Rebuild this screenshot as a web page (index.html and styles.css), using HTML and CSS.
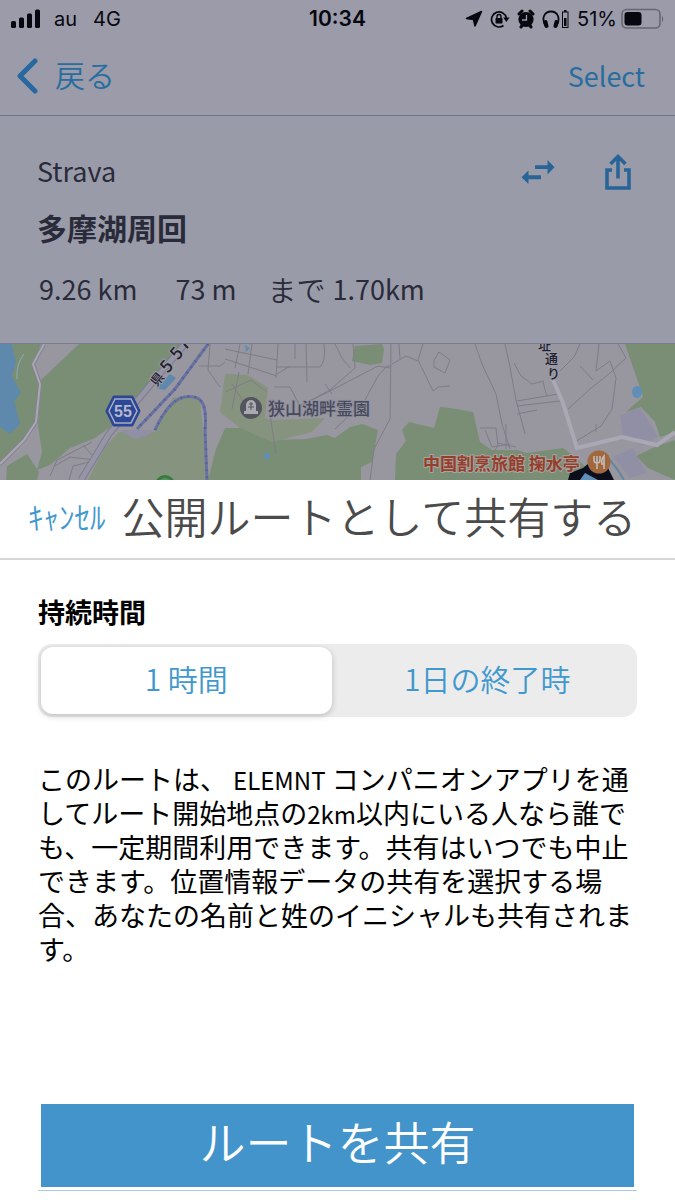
FILE: index.html
```html
<!DOCTYPE html>
<html lang="ja">
<head>
<meta charset="utf-8">
<meta name="viewport" content="width=device-width, initial-scale=1">
<title>公開ルートとして共有する</title>
<link rel="stylesheet" href="styles.css">
</head>
<body>
<div class="backdrop">
  <div class="status">
    <div class="status-side">
      <svg class="icon" width="32" height="20" viewBox="0 0 32 20" aria-hidden="true"><rect x="1" y="12" width="5" height="7" rx="1.500"/><rect x="9" y="8.500" width="5" height="10.500" rx="1.500"/><rect x="17" y="4.500" width="5" height="14.500" rx="1.500"/><rect x="25" y="0.500" width="5" height="18.500" rx="1.500"/></svg>
      <span class="carrier">au</span>
      <span class="network">4G</span>
    </div>
    <time class="clock">10:34</time>
    <div class="status-side status-right">
      <svg class="icon" width="18" height="18" viewBox="0 0 18 18" aria-hidden="true"><path d="M16.500 1.500 L10 16 L8.500 9.500 L1.500 8.500 Z" stroke="#07070f" stroke-width="1.500" stroke-linejoin="round"/></svg>
      <svg class="icon" width="20" height="18" viewBox="0 0 20 18" aria-hidden="true"><path d="M13.500 15.500 A7.500 7.500 0 1 1 16.400 8" fill="none" stroke="#07070f" stroke-width="1.700"/><path d="M13.200 7.500 h6.300 l-3.100 4.500z"/><rect x="5.500" y="8" width="7" height="5.500" rx="0.800"/><path d="M7 8 V6.500 a2 2 0 0 1 4 0 V8" fill="none" stroke="#07070f" stroke-width="1.400"/></svg>
      <svg class="icon" width="18" height="20" viewBox="0 0 18 20" aria-hidden="true"><circle cx="9" cy="10.500" r="7.600"/><path d="M2 5 L5 2 M16 5 L13 2 M4 18 L5.500 16 M14 18 L12.500 16" stroke="#07070f" stroke-width="3" stroke-linecap="round"/><path d="M9.500 6 V11 H5" fill="none" stroke="#9b9ba9" stroke-width="1.300"/></svg>
      <svg class="icon" width="28" height="20" viewBox="0 0 28 20" aria-hidden="true"><path d="M3.500 17 C-1 9 2.500 2.500 9 2.500 S19 9 14.500 17" fill="none" stroke="#07070f" stroke-width="1.800"/><rect x="2" y="11" width="4" height="8" rx="1.800" transform="rotate(-14 4 15)"/><rect x="12" y="11" width="4" height="8" rx="1.800" transform="rotate(14 14 15)"/><rect x="20.500" y="3" width="5.500" height="15.500" fill="none" stroke="#07070f"/><rect x="22" y="1" width="2.500" height="2"/><rect x="22" y="9" width="2.500" height="8"/></svg>
      <span class="percent">51%</span>
      <svg class="icon" width="44" height="22" viewBox="0 0 44 22" aria-hidden="true"><rect x="1" y="1.500" width="38" height="18.500" rx="4.500" fill="none" stroke="#676773" stroke-width="1.600"/><rect x="3.500" y="4" width="17" height="13.500" rx="3"/><path d="M41 7.500 q2.500 3.500 0 7z" fill="#676773"/></svg>
    </div>
  </div>
  <nav class="nav">
    <a class="nav-link back" href="#"><svg width="22" height="36" viewBox="0 0 22 36" aria-hidden="true"><path d="M19 3 L4 18 L19 33" fill="none" stroke="#2868a0" stroke-width="5" stroke-linecap="round" stroke-linejoin="round"/></svg><span class="back-text">戻る</span></a>
    <a class="nav-link" href="#">Select</a>
  </nav>
  <section class="summary">
    <div class="summary-top">
      <span>Strava</span>
      <div class="actions">
        <button class="icon-button" type="button" aria-label="ルートを反転"><svg width="34" height="28" viewBox="0 0 34 28"><path d="M14 7.300 H26.500 V2 L33.500 9.200 L26.500 16.400 V11 H14z M20 17.200 H7.500 V12.500 L0.500 19.200 L7.500 26 V21.200 H20z" fill="#286497"/></svg></button>
        <button class="icon-button" type="button" aria-label="共有"><svg width="28" height="38" viewBox="0 0 28 38"><path d="M8 17 H3 V35 H25 V17 H20" fill="none" stroke="#286497" stroke-width="3.600"/><path d="M14 25.500 V4 M6.500 11 L14 3.500 L21.500 11" fill="none" stroke="#286497" stroke-width="3.600"/></svg></button>
      </div>
    </div>
    <h1 class="route-name">多摩湖周回</h1>
    <div class="stats"><span>9.26 km</span><span>73 m</span><span class="remaining"><span class="until">まで</span><span>1.70km</span></span></div>
  </section>
  <svg class="map" viewBox="0 0 675 136" preserveAspectRatio="xMidYMid slice" role="img" aria-label="地図">
    <rect width="675" height="136" fill="#98969f"/>
    <g fill="#7a8e75">
      <path d="M0 0 H41 L33 19 L40 40 L36 82 L0 122z"/>
      <path d="M79 0 H184 L137 54 L113 81 L95 94 L70 104 L50 121 L37 126 L42 108 L38 82 L41 36z"/>
      <path d="M7 122 L27 110 L39 128 L37 136 H6z"/>
      <path d="M225 84 L242 84 L272 96 L306 95 L327 91 L335 94 L350 83 L362 80 L378 86 L372 118 L361 123 V136 H208 L216 105z"/>
      <path d="M355 2 L382 0 L384 5 L382 19 L370 21 L352 17z"/>
      <path d="M450 64 L473 68 L480 98 L492 106 L517 106 L527 109 L563 104 L574 112 L600 136 H395 L396 110 L406 97 L402 86 L409 78 L434 84 L440 63z"/>
      <path d="M625 0 H675 V88 L660 93 L655 78 L641 63 L626 68 L643 53 L635 29z"/>
      <path d="M636 112 L657 102 L675 96 V136 L648 124z"/>
    </g>
    <path d="M119 88 L155 88 L173 54 Q190 50 200 54 L207 136 H88 L105 103z M225 30 L248 31 L268 44 L265 74 L272 76 L325 74 L312 88 L272 98 L240 84 L220 68z" fill="#86947f"/>
    <path d="M620 71 L640 64 L658 93 L643 102 L623 93z M613 113 L633 104 L637 113 L647 129 L630 134z M119 86 L155 86 L146 92 L135 95z" fill="#918fa5"/>
    <path d="M0 0 H12 L16 19 L12 32 L21 49 L14 57 L20 80 L10 90 L0 83z M156 44 L170 30 L176 34 L165 46z" fill="#5e89ad"/>
    <g fill="#5f8eb8"><ellipse cx="637" cy="48" rx="5" ry="6"/><circle cx="267" cy="112" r="3"/><path d="M245 1 l5 3 l-4 4z"/></g>
    <g fill="none" stroke="#7e7c87" stroke-width="1">
      <path d="M225 15 L277 32 M225 5 L277 16 M240 0 L235 24 M252 0 L248 30 M278 0 L276 34 M295 15 V0 M306 0 L307 38 M277 23 H320 Q326 17 324 0 M335 0 L342 14 L350 24 M277 30 L290 22 M325 40 L332 50 M274 43 H290 L300 62 L330 46 L355 24 L353 0"/>
      <path d="M300 62 L330 47 L378 22 L390 24 M335 85 L365 56 L378 32 L387 22 H391 M391 0 L390 75 L374 105 L370 136 M392 20 L406 12 L418 17 M399 0 L400 15 M423 0 L418 16 L433 47 L438 43 L450 42 M434 16 L439 8 L450 16 L445 29 L434 23z"/>
      <path d="M475 0 L482 20 L496 50 L502 80 L510 105 M505 0 L509 18 L516 56 L525 90 M514 19 L521 32 L532 40 L544 37 M517 57 L558 50 M517 70 L537 66 M517 62 L560 57 M543 38 L547 53 M560 27 L574 13 L580 0 M568 65 L590 45 L610 29 L626 14 L618 0 M580 22 L593 36 M599 0 L596 27 L610 17 L616 34 L612 65 L601 82 L575 98 M596 80 V88"/>
      <path d="M480 84 H496 L498 102 L490 112 M485 86 L492 103 L510 100 M506 80 V105 M498 99 L516 103"/>
      <path d="M50 132 L57 116 L92 98 M55 122 L70 113 L95 116 M69 136 L73 122 L93 117 M83 101 L92 111 M199 22 H220 L225 18 M210 0 L208 26 L220 43"/>
      <path d="M225 48 L251 36 L267 48 M232 40 L250 68 M239 28 L232 65 M270 70 L276 110"/>
    </g>
    <g fill="none" stroke="#aaa8b5" stroke-width="4"><path d="M44 0 L33 20 L40 40 L36 78 L24 96 L0 120" stroke="#85838f"/><path d="M44 0 L33 20 L40 40 L36 78 L24 96 L0 120" stroke-width="2"/><path d="M24 10 Q16 20 17 35" stroke="#8eacb8" stroke-width="1"/><path d="M185 0 L109 90 L81 136" stroke="#7c7b91" stroke-width="7"/><path d="M185 0 L109 90 L81 136" stroke="#9695a5" stroke-width="5"/><path d="M553 36 L563 59 L577 104 L622 93 L657 101 L675 88"/></g>
    <path d="M208 0 L175 45 L137 85 M155 86 Q172 48 194 53 Q208 55 205 86 L207 136" fill="none" stroke="#6872a0" stroke-width="3"/>
    <path d="M208 0 L175 45 L137 85 M155 86 Q172 48 194 53 Q208 55 205 86 L207 136" fill="none" stroke="#4f5c94" stroke-width="3" stroke-dasharray="1 6"/>
    <g class="road-text"><text text-anchor="middle" transform="translate(161 38) rotate(-50)">県</text><text class="road-number" text-anchor="middle" transform="translate(171 26) rotate(-50)">5</text><text class="road-number" text-anchor="middle" transform="translate(181 13) rotate(-50)">5</text><text x="538" y="6">址</text><text x="545" y="19">通</text><text x="547" y="34">り</text></g>
    <path d="M184 0 L188 4" stroke="#20202c" stroke-width="2"/>
    <path d="M114 53 H132 L139 67 L132 81 H114 L107 67z" fill="#2b4795" stroke="#2b4795" stroke-width="3" stroke-linejoin="round"/><path d="M115 55 H131 L137 67 L131 79 H115 L109 67z" fill="none" stroke="#a8adc4" stroke-width="1.500"/>
    <text class="shield" x="123" y="73" text-anchor="middle">55</text>
    <circle cx="165" cy="141" r="10" fill="#327f3b"/><path d="M160 136 q5 -4 10 0" fill="#658a64"/>
    <path d="M568 136 L570 129 L583 124 L589 119 L608 124 L614 136z" fill="#0c0e1c"/><path d="M580 136 L585 129 L598 136z" fill="#5f8eb8"/><path d="M610 116 Q618 125 624 136" fill="none" stroke="#6586a0" stroke-width="2"/>
    <circle cx="251" cy="64" r="11" fill="#54545f"/><path d="M246 67 V61 a5 5 0 0 1 10 0 V67 H258 V70 H244 V67z" fill="#aaa9b2"/><path d="M249 60 h4 M251 58 v8 M248 63 h6" stroke="#54545f"/>
    <text class="place" x="268" y="71">狭山湖畔霊園</text>
    <text class="food" x="423" y="126">中国割烹旅館 掬水亭</text>
    <circle cx="599" cy="118" r="11.500" fill="#a1683d"/><path d="M594 112 V116 Q594 119 597 119 V125 M597 112 V120 M600 112 V116 Q600 119 597 119 M604 125 V112 Q601 115 602 120 H604" fill="none" stroke="#c2bbb9" stroke-width="1.600"/>
  </svg>
</div>
<main class="sheet">
  <header class="sheet-header"><button class="cancel" type="button">ｷｬﾝｾﾙ</button><h2 class="sheet-title">公開ルートとして共有する</h2></header>
  <form class="sheet-body">
    <fieldset class="duration">
      <legend class="legend">持続時間</legend>
      <div class="segments">
        <label class="segment"><input class="segment-input" type="radio" name="duration" checked><span>1 時間</span></label>
        <label class="segment segment-end"><input class="segment-input" type="radio" name="duration"><span>1日の終了時</span></label>
      </div>
    </fieldset>
    <p class="note">このルートは、 <span class="latin">ELEMNT</span> コンパニオンアプリを通してルート開始地点の<span class="latin">2km</span>以内にいる人なら誰でも、一定期間利用できます。共有はいつでも中止できます。位置情報データの共有を選択する場合、あなたの名前と姓のイニシャルも共有されます。</p>
    <div class="submit-row"><button class="submit" type="submit">ルートを共有</button></div>
  </form>
</main>
</body>
</html>
```

FILE: styles.css
```css
* { box-sizing: border-box; }
body {
  margin: 0;
  min-height: 100vh;
  display: flex;
  flex-direction: column;
  background: #fff;
  color: #000;
  font-family: "Noto Sans CJK JP", sans-serif;
}
button { padding: 0; border: 0; background: none; font: inherit; cursor: pointer; }
svg { display: block; flex: none; }
h1, h2, p { margin: 0; }
.backdrop { background: #9a9ba9; color: #2a2b3a; }
.status {
  display: grid;
  grid-template-columns: 1fr auto 1fr;
  align-items: center;
  height: 37px;
  padding: 0 10px;
  background: #9b9ba9;
  color: #07070f;
  font: 20px/24px Inter, sans-serif;
}
.status-side { display: flex; align-items: center; }
.status-right { justify-content: flex-end; gap: 7px; white-space: nowrap; }
.status-right .icon:last-child { margin-left: -3px; }
.icon { fill: #07070f; }
.carrier { margin: 0 16px 0 12px; }
.clock { font-size: 21px; font-weight: 600; }
.nav {
  display: flex;
  justify-content: space-between;
  align-items: center;
  height: 79px;
  padding: 0 30px 0 16px;
  border-bottom: 1px solid #73748a;
  background: #9b9ba9;
}
.nav-link { color: #286d9f; font-size: 27px; line-height: 40px; text-decoration: none; }
.back { display: flex; align-items: center; gap: 17px; font-size: 30px; }
.back-text { padding-bottom: 5px; font-weight: 350; }
.summary { padding: 35px 43px 34px 37px; border-bottom: 1px solid #7b7c90; font-size: 27px; line-height: 40px; }
.summary-top { display: flex; justify-content: space-between; align-items: center; }
.actions { display: flex; align-items: center; gap: 49px; padding-top: 2px; }
.icon-button { color: #286497; }
.route-name { margin-top: 14px; font-size: 30px; line-height: 44px; font-weight: 700; }
.stats { display: flex; gap: 38px; margin-top: 20px; padding-left: 2px; white-space: nowrap; }
.remaining { display: flex; gap: 7px; margin-left: -7px; }
.until { font-size: 29px; font-weight: 350; }
.map { width: 100%; height: 136px; }
.road-text { fill: #20202c; font-size: 13px; font-weight: 500; stroke: #9c9ba7; stroke-width: 2px; paint-order: stroke; }
.road-number { font-size: 17px; }
.shield { fill: #b5b8cc; font: bold 16px "Liberation Sans", sans-serif; }
.place { fill: #474a5a; font-size: 17px; font-weight: 500; stroke: #9291a0; stroke-width: 2px; paint-order: stroke; }
.food { fill: #963d2b; font-size: 17px; font-weight: 700; stroke: #a7a39f; stroke-width: 2px; paint-order: stroke; }
.sheet { flex: 1; display: flex; flex-direction: column; background: #fff; }
.sheet-header {
  display: flex;
  align-items: center;
  gap: 16px;
  height: 80px;
  padding: 0 28px 8px;
  border-bottom: 2px solid #d6d6d6;
  white-space: nowrap;
}
.cancel { color: #4098cf; font-size: 31px; font-weight: 350; }
.sheet-title { color: #4b4b4b; font-size: 43px; line-height: 60px; font-weight: 350; }
.sheet-body { flex: 1; display: flex; flex-direction: column; padding: 32px 38px 9px; }
.duration { min-width: 0; margin: 0; padding: 0; border: 0; }
.legend { padding: 0; font-size: 27px; line-height: 40px; font-weight: 700; }
.segments {
  display: grid;
  grid-template-columns: minmax(0, 49fr) minmax(0, 51fr);
  height: 73px;
  margin-top: 12px;
  padding: 3px;
  border-radius: 14px;
  background: #ececec;
}
.segment {
  display: flex;
  align-items: center;
  justify-content: center;
  padding-bottom: 5px;
  border-radius: 12px;
  color: #4098cf;
  font-size: 30px;
  font-weight: 350;
  cursor: pointer;
}
.segment-end { padding-left: 9px; }
.segment:has(:checked) { background: #fff; box-shadow: 0 2px 6px #0003; }
.segment-input { position: absolute; opacity: 0; }
.note { margin-top: 45px; font-size: 27px; line-height: 34px; }
.latin { font-size: 24px; line-height: 20px; }
.submit-row { margin: auto 0 0; padding: 0 3px 3px; border-bottom: 1px solid #a9cde5; }
.submit { width: 100%; height: 83px; padding-bottom: 12px; background: #4294cb; color: #fff; font-size: 46px; font-weight: 350; line-height: 70px; }
```
